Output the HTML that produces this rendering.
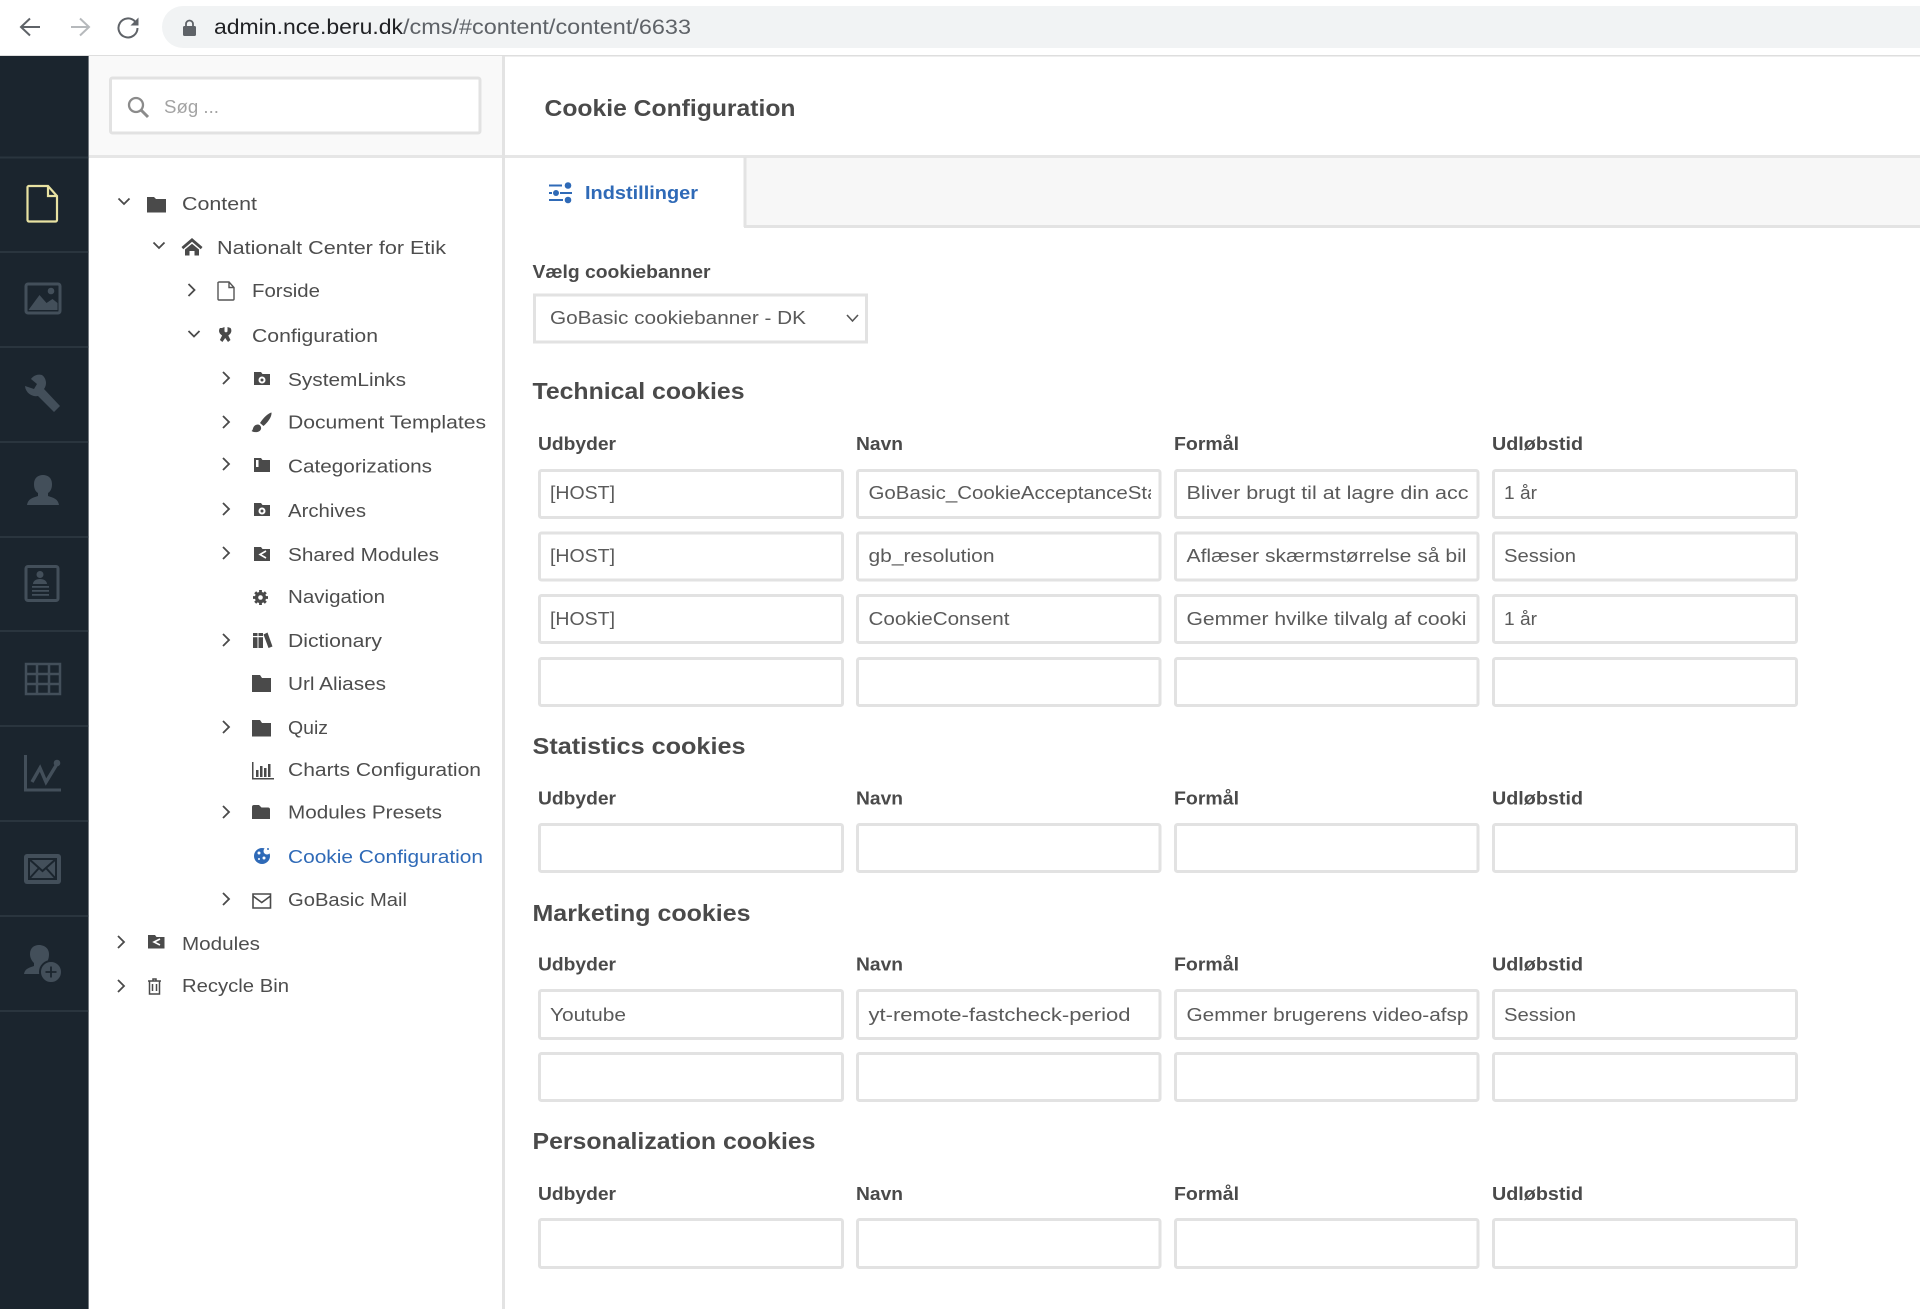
<!DOCTYPE html>
<html lang="da"><head><meta charset="utf-8"><title>Cookie Configuration</title>
<style>
html,body{margin:0;padding:0;background:#fff}
svg{display:block}
#p{filter:blur(.35px)}
text{font-family:"Liberation Sans",sans-serif;font-size:18.5px;fill:#4d4d4d}
.b{font-weight:bold;fill:#4a4a4a}
.h{font-weight:bold;font-size:23.5px;fill:#4a4a4a}
.in{fill:#5a5a5a}
.box{fill:#fff;stroke:#e2e2e2;stroke-width:3}
.ti{fill:#4a4a4a}
.nv{fill:#434f5a}
.ns{fill:none;stroke:#434f5a;stroke-width:3}
.ch{fill:none;stroke:#4a4a4a;stroke-width:1.8}
</style></head><body>
<svg id="p" xmlns="http://www.w3.org/2000/svg" width="1920" height="1309" viewBox="0 0 1920 1309">
<!-- browser bar -->
<rect width="1920" height="55" fill="#fff"/><rect y="55" width="1920" height="1.5" fill="#dedede"/>
<path d="M40 27H22M30 18.500l-9 8.500 9 8.500" fill="none" stroke="#5f6368" stroke-width="2"/>
<path d="M71 27H88M80 18.500l9 8.500-9 8.500" fill="none" stroke="#b6b9bc" stroke-width="2"/>
<path d="M135 21.500A9.500 9.500 0 1 0 137.500 28" fill="none" stroke="#5f6368" stroke-width="2"/><path d="M138.500 17.500v8h-8z" fill="#5f6368"/>
<path d="M183 48a21 21 0 0 1 0-42H1920v42z" fill="#f1f3f4"/>
<rect x="183" y="26" width="13" height="10" rx="1.500" fill="#5f6368"/><path d="M186 27v-3a3.300 3.300 0 0 1 7 0v3" fill="none" stroke="#5f6368" stroke-width="1.800"/>
<text x="214" y="34" style="font-size:21px;fill:#202124" textLength="189" lengthAdjust="spacingAndGlyphs">admin.nce.beru.dk</text>
<text x="403" y="34" style="font-size:21px;fill:#5f6368" textLength="288" lengthAdjust="spacingAndGlyphs">/cms/#content/content/6633</text>

<!-- left nav -->
<rect y="56" width="88.600" height="1253" fill="#1b252e"/>
<g fill="#2a353e"><rect y="156.500" width="88.600" height="2"/><rect y="251" width="88.600" height="2"/><rect y="346" width="88.600" height="2"/><rect y="441" width="88.600" height="2"/><rect y="536" width="88.600" height="2"/><rect y="630" width="88.600" height="2"/><rect y="725" width="88.600" height="2"/><rect y="820" width="88.600" height="2"/><rect y="915" width="88.600" height="2"/><rect y="1010" width="88.600" height="2"/></g>
<path d="M29 186h19l9 10v24a1.500 1.500 0 0 1-1.500 1.500h-26.500a1.500 1.500 0 0 1-1.500-1.500v-33a1.500 1.500 0 0 1 1-1zM48 186v10h9" fill="none" stroke="#e8e2a2" stroke-width="2.200"/>
<rect x="26" y="284" width="34" height="29" rx="2" class="ns"/><path d="M28.500 310l11-15 7 8 6-4 5 4v7z" class="nv"/><circle cx="51" cy="291" r="3.300" class="nv"/>
<path d="M42 376a10 10 0 0 0-11 4l6 5-3 5-9-3a11 11 0 0 0 13 10l16 16 6-6-16-17a10 10 0 0 0-2-14z" class="nv" transform="translate(0,-1)"/>
<path d="M27 505c1-6 5-7 11-9v-3c-3-2-4-5-4-9 0-6 4-9 9-9s9 3 9 9c0 4-1 7-4 9v3c6 2 10 3 11 9z" class="nv"/>
<rect x="26" y="566.500" width="32" height="34" rx="2" class="ns"/><circle cx="40" cy="574.500" r="3.500" class="nv"/><path d="M33 584c0-3 3-5 7-5s7 2 7 5z M32 586h17v1.800H32zM32 590h17v1.800H32zM32 594h17v1.800H32z" class="nv"/>
<path d="M26 664h34v30H26zM26 674h34M26 684h34M37 664v30M49 664v30" class="ns" style="stroke-width:2.500"/>
<path d="M25.500 755v35h35.500" class="ns"/><path d="M32 782l8-14 6 14 11-18" fill="none" stroke="#434f5a" stroke-width="3.400"/><circle cx="57" cy="763" r="3.300" class="nv"/>
<rect x="24" y="854" width="37" height="30" rx="3" class="nv"/><path d="M29 859h27v20H29zM29 859l13.500 12 13.500-12M29 879l10-11M56 879l-10-11" fill="none" stroke="#1b252e" stroke-width="2"/>
<path d="M24 974c1-5 4-6 10-8v-3c-2-2-4-5-4-9 0-6 4-9 9-9s10 3 10 9c0 4-1 7-3 9l1 3-6 8z" class="nv"/><circle cx="51" cy="972" r="11" class="nv" stroke="#1b252e" stroke-width="2"/><path d="M51 966.500v11M45.500 972h11" stroke="#1b252e" stroke-width="1.800"/>

<!-- tree panel -->
<rect x="89" y="56" width="413" height="100" fill="#f9f9f9"/>
<rect x="89" y="155" width="1831" height="3" fill="#e6e6e6"/>
<rect x="502" y="56" width="3" height="1253" fill="#e3e3e3"/>
<rect x="110.500" y="78" width="369.500" height="55" rx="2" class="box"/>
<circle cx="136" cy="105" r="7" fill="none" stroke="#8b8b8b" stroke-width="2.300"/><path d="M141 110l7 7" stroke="#8b8b8b" stroke-width="3"/>
<text x="164" y="113" style="fill:#a3a3a3" textLength="55" lengthAdjust="spacingAndGlyphs">Søg ...</text>

<!-- tree chevrons -->
<g class="ch">
<path class="ch" d="M118.500 198.500l5.500 5.500 5.500-5.500M153.500 242.500l5.500 5.500 5.500-5.500M188.500 331l5.500 5.500 5.500-5.500"/>
<path class="ch" d="M188.500 284l6 6-6 6M223 372l6 6-6 6M223 416l6 6-6 6M223 458l6 6-6 6M223 503l6 6-6 6M223 547l6 6-6 6M223 634l6 6-6 6M223 721l6 6-6 6M223 806l6 6-6 6M223 893l6 6-6 6M118 936l6 6-6 6M118 980l6 6-6 6"/>
</g>
<!-- tree icons -->
<path class="ti" d="M147 197h7l2 2h10v13.500h-19z"/>
<path class="ti" d="M192 238l10.500 9-1.700 2.200-8.800-7.400-8.800 7.400-1.700-2.200z M185 249.500l7-5.800 7 5.800v6h-4.500v-4.500h-5v4.500H185z"/>
<path d="M219 282h10l5 5.500v11.500a1 1 0 0 1-1 1h-14a1 1 0 0 1-1-1v-16.500zM229 282v5.500h5" fill="none" stroke="#555" stroke-width="1.400"/>
<path class="ti" d="M222 328l2.500-1v4.500l1.500 1 1.500-1v-4.500l3 1c1.500 2 1 5-1 6.500l-1.200 1 2.200 4.500-2.500 2-2.800-4-2.800 4-2.500-2 2.200-4.500-1.200-1c-2-1.500-2.500-4.500-.9-6.500z"/>
<g class="ti"><path d="M254 372h7l1.500 2h7.500v11h-16z"/><circle cx="262" cy="380" r="3.500" fill="#fff"/><circle cx="262" cy="380" r="1.500"/></g>
<path class="ti" d="M271.500 412.500c-3 .5-8 5-11.500 10.500l3.500 3c4-3.500 8.500-9 8-13.500zM258 424.500c-3 0-4.500 2-5 4-.3 1.300-.7 2-1.500 2.500 3 2 8.500 1.500 9.500-2 .6-2-1-4.500-3-4.500z"/>
<g class="ti"><path d="M254 458h7l1.500 2h7.500v12h-16z"/><rect x="256" y="460" width="2.500" height="7" fill="#fff"/></g>
<g class="ti"><path d="M254 503h7l1.500 2h7.500v11h-16z"/><circle cx="262" cy="511" r="3.500" fill="#fff"/><circle cx="262" cy="511" r="1.500"/></g>
<g><path class="ti" d="M254 547h7l1.500 2h7.500v12h-16z"/><path d="M266 551l-6 3.500 6 3.500" fill="none" stroke="#fff" stroke-width="1.600"/></g>
<g><circle cx="260.500" cy="597.500" r="5.600" fill="#4a4a4a"/><path d="M260.500 590v15M253 597.500h15M255.200 592.200l10.600 10.600M265.800 592.200l-10.600 10.600" stroke="#4a4a4a" stroke-width="2.800"/><circle cx="260.500" cy="597.500" r="2.300" fill="#fff"/></g>
<g class="ti"><rect x="253" y="633" width="4.500" height="15"/><rect x="258.500" y="633" width="4.500" height="15"/><path d="M263.500 634.500l4-2 5 14-4 1.500z"/><rect x="253" y="636" width="10" height="1.200" fill="#fff"/></g>
<path class="ti" d="M252 675h8l2 3h9v14h-19z"/>
<path class="ti" d="M252 720h8l2 3h9v13.500h-19z"/>
<g class="ti"><rect x="252" y="762" width="1.500" height="17"/><rect x="252" y="778" width="22" height="1.500"/><rect x="256" y="770" width="2.500" height="7"/><rect x="260" y="766" width="2.500" height="11"/><rect x="264" y="768" width="2.500" height="9"/><rect x="268" y="764" width="2.500" height="13"/></g>
<path class="ti" d="M252 807a2 2 0 0 1 2-2h5l2.500 2.500h6.500a2 2 0 0 1 2 2v9.500h-18z"/>
<g><circle cx="262" cy="856" r="8" fill="#2f6ab7"/><circle cx="259" cy="853" r="1.500" fill="#fff"/><circle cx="264" cy="858" r="1.500" fill="#fff"/><circle cx="259" cy="859" r="1" fill="#fff"/><circle cx="267" cy="851" r="3.500" fill="#fff"/><circle cx="268" cy="849" r="1" fill="#2f6ab7"/></g>
<path d="M253 894h17.500v14h-17.500zM253 896l8.750 6.500 8.750-6.500" fill="none" stroke="#4a4a4a" stroke-width="1.600"/>
<g><path class="ti" d="M148 935h7l1.500 2h8v11.500h-16.500z"/><path d="M160 939l-6 3 6 3" fill="none" stroke="#fff" stroke-width="1.600"/></g>
<path d="M148 981h13M153 981v-2h3v2M149.500 981v13h10v-13M152.500 984v7M156.500 984v7" fill="none" stroke="#4a4a4a" stroke-width="1.500"/>

<!-- tree text -->
<text x="182" y="210" textLength="75" lengthAdjust="spacingAndGlyphs">Content</text>
<text x="217" y="254" textLength="229" lengthAdjust="spacingAndGlyphs">Nationalt Center for Etik</text>
<text x="252" y="297" textLength="68" lengthAdjust="spacingAndGlyphs">Forside</text>
<text x="252" y="342" textLength="126" lengthAdjust="spacingAndGlyphs">Configuration</text>
<text x="288" y="386" textLength="118" lengthAdjust="spacingAndGlyphs">SystemLinks</text>
<text x="288" y="428.500" textLength="198" lengthAdjust="spacingAndGlyphs">Document Templates</text>
<text x="288" y="472.500" textLength="144" lengthAdjust="spacingAndGlyphs">Categorizations</text>
<text x="288" y="517" textLength="78" lengthAdjust="spacingAndGlyphs">Archives</text>
<text x="288" y="561" textLength="151" lengthAdjust="spacingAndGlyphs">Shared Modules</text>
<text x="288" y="603" textLength="97" lengthAdjust="spacingAndGlyphs">Navigation</text>
<text x="288" y="647" textLength="94" lengthAdjust="spacingAndGlyphs">Dictionary</text>
<text x="288" y="690" textLength="98" lengthAdjust="spacingAndGlyphs">Url Aliases</text>
<text x="288" y="734" textLength="40" lengthAdjust="spacingAndGlyphs">Quiz</text>
<text x="288" y="776" textLength="193" lengthAdjust="spacingAndGlyphs">Charts Configuration</text>
<text x="288" y="818.500" textLength="154" lengthAdjust="spacingAndGlyphs">Modules Presets</text>
<text x="288" y="863" textLength="195" lengthAdjust="spacingAndGlyphs" style="fill:#2f6ab7">Cookie Configuration</text>
<text x="288" y="906" textLength="119" lengthAdjust="spacingAndGlyphs">GoBasic Mail</text>
<text x="182" y="950" textLength="78" lengthAdjust="spacingAndGlyphs">Modules</text>
<text x="182" y="992" textLength="107" lengthAdjust="spacingAndGlyphs">Recycle Bin</text>

<!-- main header -->
<text x="544.500" y="116" class="h" textLength="251" lengthAdjust="spacingAndGlyphs">Cookie Configuration</text>
<rect x="745" y="158" width="1175" height="68" fill="#f7f7f7"/>
<rect x="743.500" y="157" width="3" height="70" fill="#e3e3e3"/>
<rect x="744" y="225" width="1176" height="3" fill="#e3e3e3"/>
<g fill="#2f6ab7"><rect x="549" y="184.500" width="13" height="2"/><rect x="549" y="192" width="3" height="2"/><rect x="560" y="192" width="12" height="2"/><rect x="549" y="199" width="14" height="2"/><circle cx="568" cy="185.500" r="3.300"/><circle cx="556" cy="193" r="3"/><circle cx="568" cy="200" r="3.300"/></g>
<text x="585" y="199" class="b" style="fill:#2f6ab7" textLength="113" lengthAdjust="spacingAndGlyphs">Indstillinger</text>

<!-- select -->
<text x="532.500" y="278" class="b" textLength="178" lengthAdjust="spacingAndGlyphs">Vælg cookiebanner</text>
<rect x="534.500" y="295" width="332" height="47" class="box"/>
<text x="550" y="324" class="in" textLength="256" lengthAdjust="spacingAndGlyphs">GoBasic cookiebanner - DK</text>
<path d="M847 315l5.500 6 5.500-6" fill="none" stroke="#555" stroke-width="1.600"/>

<!-- TECHNICAL -->
<text x="532.500" y="399" class="h" textLength="212" lengthAdjust="spacingAndGlyphs">Technical cookies</text>
<text x="538" y="450" class="b" textLength="78" lengthAdjust="spacingAndGlyphs">Udbyder</text><text x="856" y="450" class="b" textLength="47" lengthAdjust="spacingAndGlyphs">Navn</text><text x="1174" y="450" class="b" textLength="65" lengthAdjust="spacingAndGlyphs">Formål</text><text x="1492" y="450" class="b" textLength="91" lengthAdjust="spacingAndGlyphs">Udløbstid</text>
<g>
<rect x="539.500" y="470.500" width="303" height="47" rx="2" class="box"/><rect x="857.500" y="470.500" width="302.500" height="47" rx="2" class="box"/><rect x="1175.500" y="470.500" width="302.500" height="47" rx="2" class="box"/><rect x="1493.500" y="470.500" width="303" height="47" rx="2" class="box"/>
<rect x="539.500" y="533" width="303" height="47" rx="2" class="box"/><rect x="857.500" y="533" width="302.500" height="47" rx="2" class="box"/><rect x="1175.500" y="533" width="302.500" height="47" rx="2" class="box"/><rect x="1493.500" y="533" width="303" height="47" rx="2" class="box"/>
<rect x="539.500" y="595.500" width="303" height="47" rx="2" class="box"/><rect x="857.500" y="595.500" width="302.500" height="47" rx="2" class="box"/><rect x="1175.500" y="595.500" width="302.500" height="47" rx="2" class="box"/><rect x="1493.500" y="595.500" width="303" height="47" rx="2" class="box"/>
<rect x="539.500" y="658.500" width="303" height="47" rx="2" class="box"/><rect x="857.500" y="658.500" width="302.500" height="47" rx="2" class="box"/><rect x="1175.500" y="658.500" width="302.500" height="47" rx="2" class="box"/><rect x="1493.500" y="658.500" width="303" height="47" rx="2" class="box"/>
</g>
<text x="550" y="499" class="in" textLength="65" lengthAdjust="spacingAndGlyphs">[HOST]</text>
<svg x="868" y="475" width="283" height="40"><text x="0.500" y="24" class="in" textLength="290" lengthAdjust="spacingAndGlyphs">GoBasic_CookieAcceptanceSta</text></svg>
<text x="1186.500" y="499" class="in" textLength="282" lengthAdjust="spacingAndGlyphs">Bliver brugt til at lagre din acc</text>
<text x="1504" y="499" class="in" textLength="33" lengthAdjust="spacingAndGlyphs">1 år</text>
<text x="550" y="562" class="in" textLength="65" lengthAdjust="spacingAndGlyphs">[HOST]</text>
<text x="868.500" y="562" class="in" textLength="126" lengthAdjust="spacingAndGlyphs">gb_resolution</text>
<text x="1186.500" y="562" class="in" textLength="280" lengthAdjust="spacingAndGlyphs">Aflæser skærmstørrelse så bil</text>
<text x="1504" y="562" class="in" textLength="72" lengthAdjust="spacingAndGlyphs">Session</text>
<text x="550" y="625" class="in" textLength="65" lengthAdjust="spacingAndGlyphs">[HOST]</text>
<text x="868.500" y="625" class="in" textLength="141" lengthAdjust="spacingAndGlyphs">CookieConsent</text>
<text x="1186.500" y="625" class="in" textLength="280" lengthAdjust="spacingAndGlyphs">Gemmer hvilke tilvalg af cooki</text>
<text x="1504" y="625" class="in" textLength="33" lengthAdjust="spacingAndGlyphs">1 år</text>

<!-- STATISTICS -->
<text x="532.500" y="754" class="h" textLength="213" lengthAdjust="spacingAndGlyphs">Statistics cookies</text>
<text x="538" y="804.500" class="b" textLength="78" lengthAdjust="spacingAndGlyphs">Udbyder</text><text x="856" y="804.500" class="b" textLength="47" lengthAdjust="spacingAndGlyphs">Navn</text><text x="1174" y="804.500" class="b" textLength="65" lengthAdjust="spacingAndGlyphs">Formål</text><text x="1492" y="804.500" class="b" textLength="91" lengthAdjust="spacingAndGlyphs">Udløbstid</text>
<rect x="539.500" y="824.500" width="303" height="47" rx="2" class="box"/><rect x="857.500" y="824.500" width="302.500" height="47" rx="2" class="box"/><rect x="1175.500" y="824.500" width="302.500" height="47" rx="2" class="box"/><rect x="1493.500" y="824.500" width="303" height="47" rx="2" class="box"/>

<!-- MARKETING -->
<text x="532.500" y="921" class="h" textLength="218" lengthAdjust="spacingAndGlyphs">Marketing cookies</text>
<text x="538" y="970.500" class="b" textLength="78" lengthAdjust="spacingAndGlyphs">Udbyder</text><text x="856" y="970.500" class="b" textLength="47" lengthAdjust="spacingAndGlyphs">Navn</text><text x="1174" y="970.500" class="b" textLength="65" lengthAdjust="spacingAndGlyphs">Formål</text><text x="1492" y="970.500" class="b" textLength="91" lengthAdjust="spacingAndGlyphs">Udløbstid</text>
<rect x="539.500" y="990.500" width="303" height="48" rx="2" class="box"/><rect x="857.500" y="990.500" width="302.500" height="48" rx="2" class="box"/><rect x="1175.500" y="990.500" width="302.500" height="48" rx="2" class="box"/><rect x="1493.500" y="990.500" width="303" height="48" rx="2" class="box"/>
<rect x="539.500" y="1053.500" width="303" height="47" rx="2" class="box"/><rect x="857.500" y="1053.500" width="302.500" height="47" rx="2" class="box"/><rect x="1175.500" y="1053.500" width="302.500" height="47" rx="2" class="box"/><rect x="1493.500" y="1053.500" width="303" height="47" rx="2" class="box"/>
<text x="550" y="1021" class="in" textLength="76" lengthAdjust="spacingAndGlyphs">Youtube</text>
<text x="868.500" y="1021" class="in" textLength="262" lengthAdjust="spacingAndGlyphs">yt-remote-fastcheck-period</text>
<text x="1186.500" y="1021" class="in" textLength="282" lengthAdjust="spacingAndGlyphs">Gemmer brugerens video-afsp</text>
<text x="1504" y="1021" class="in" textLength="72" lengthAdjust="spacingAndGlyphs">Session</text>

<!-- PERSONALIZATION -->
<text x="532.500" y="1149" class="h" textLength="283" lengthAdjust="spacingAndGlyphs">Personalization cookies</text>
<text x="538" y="1200" class="b" textLength="78" lengthAdjust="spacingAndGlyphs">Udbyder</text><text x="856" y="1200" class="b" textLength="47" lengthAdjust="spacingAndGlyphs">Navn</text><text x="1174" y="1200" class="b" textLength="65" lengthAdjust="spacingAndGlyphs">Formål</text><text x="1492" y="1200" class="b" textLength="91" lengthAdjust="spacingAndGlyphs">Udløbstid</text>
<rect x="539.500" y="1219.500" width="303" height="48" rx="2" class="box"/><rect x="857.500" y="1219.500" width="302.500" height="48" rx="2" class="box"/><rect x="1175.500" y="1219.500" width="302.500" height="48" rx="2" class="box"/><rect x="1493.500" y="1219.500" width="303" height="48" rx="2" class="box"/>
</svg>
</body></html>
